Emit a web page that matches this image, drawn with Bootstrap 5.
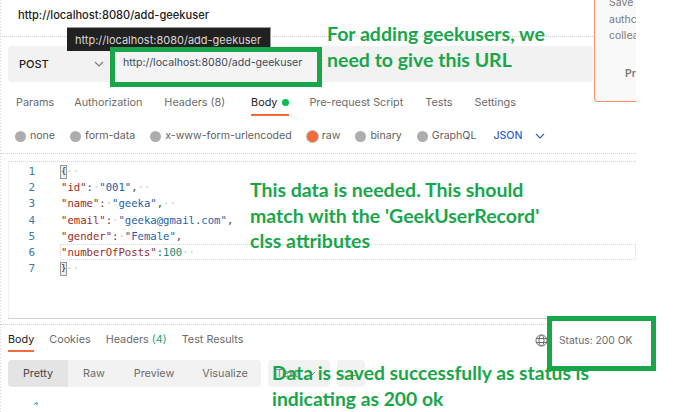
<!DOCTYPE html>
<html lang="en"><head><meta charset="utf-8"><title>Add geekuser</title>
<link href="https://cdn.jsdelivr.net/npm/bootstrap@5.3.0/dist/css/bootstrap.min.css" rel="stylesheet">
<style>
html,body{margin:0;background:#fff;overflow:hidden}
.shot{position:relative;width:685px;height:412px;overflow:hidden;font-family:Inter,"Liberation Sans",sans-serif;font-size:10.8px;color:#6b6b6b;background:repeating-linear-gradient(to bottom,#d8d8d8 0 1px,#fff 1px 3px) left top/1px 100% no-repeat}
.main-col{width:636px;height:412px}
.title-row{height:37px;padding:8px 0 0 18px;font-size:11.1px;color:#212121;font-weight:500;line-height:15px;border-bottom:1px dotted #ccc;width:593px;white-space:nowrap}
.req-bar{margin:9px 0 0 8px;width:585px;height:36px;background:#f2f2f2;border-radius:4px;padding:0 11px;color:#212121}
.req-method{width:75px;font-weight:500;font-size:11px}
.tab-row{padding-left:16px;height:33px;margin-top:4px;gap:22px}
.tab-item{position:relative;line-height:33px;white-space:nowrap}
.tab-first{margin-right:-2px}
.tab-on{color:#212121}
.tab-row .tab-on{margin-left:4px;margin-right:-2px}
.tab-on::after{content:"";position:absolute;left:0;right:0;bottom:3px;height:2px;background:#f26b3a}
.dot-on{display:inline-block;width:7px;height:7px;border-radius:50%;background:#0cbb52;margin-left:5px}
.radio-row{height:22px;margin-top:6px;padding-left:15px;color:#5f5f5f;font-size:10.6px;white-space:nowrap}
.radio-dot{display:inline-block;width:11px;height:11px;border-radius:50%;background:#adadad;margin-right:4px;flex:none}
.radio-next{margin-left:15px}
.radio-on{background:#f26b3a;box-shadow:0 0 0 1px #bbb}
.json-pick{color:#2f5fd0;font-weight:500;margin-left:17px}
.json-chev{margin-left:12px}
.sep-a{border-top:1px dotted #ccc;margin-top:6px}
.code-box{margin:7px 0 0 8px;height:157px;border-top:1px dotted #e0c4dc;padding-top:1px;font-family:"DejaVu Sans Mono","Liberation Mono",monospace;font-size:10.6px;border-left:1px dotted #e4e4e4}
.code-line{height:16.2px;line-height:16.2px;white-space:pre}
.gut{display:inline-block;width:26px;text-align:right;margin-right:26px;color:#3a7ca5;font-size:11px}
.k{color:#9c2b1f}.s{color:#1f5fa8}.n{color:#1a8a78}.p{color:#444}
.brace{display:inline-block;outline:1px solid #999;background:#eee;color:#222;width:5px;height:12px;line-height:11px;font-size:9px;overflow:hidden;vertical-align:middle}
.ws{color:#c8c8c8}
.line-six{position:absolute;left:60px;top:244px;width:576px;height:16px;border:1px dotted #d8d8d8;border-left-color:#e8c8d8}
.rule-b{width:540px;margin-left:8px;border-top:1px solid #d3d3d3}
.sep-b{border-top:1px dotted #ccc;margin-top:5px}
.res-tabs{padding-left:8px;height:27px;gap:15px}
.res-tabs .tab-item{line-height:29px}
.res-tabs .tab-on::after{bottom:0}
.count{color:#2aa56b}
.view-row{margin:8px 0 0 8px;gap:7px}
.view-seg{width:253px;height:27px;background:#f2f2f2;border-radius:4px}
.view-opt{line-height:28px;text-align:center;color:#6b6b6b}
.view-act{width:60px;height:27px;background:#e4e4e4;border-radius:4px 0 0 4px;color:#444}
.raw-opt{margin-left:15px}
.prev-opt{margin-left:29px}
.vis-opt{margin-left:28px}
.view-fmt{width:62px;height:27px;background:#f2f2f2;border-radius:4px;padding-left:8px;line-height:28px;color:#888}
.view-x{width:28px;height:27px;background:#f2f2f2;border-radius:4px;padding:12px 0 0 12px;line-height:0}
.fmt-chev{margin-left:10px;vertical-align:1px}
.mark-row{margin:15px 0 0 34px;line-height:0}
.hover-tip{position:absolute;left:67px;top:27px;width:204px;height:24px;background:#212121;border:1px solid #9a9a9a;border-width:1px 1px 0 0;color:#d8d8d8;font-size:11px;line-height:24px;padding-left:8px;white-space:nowrap}
.side-note{position:absolute;left:594px;top:-14px;width:42px;height:116px;background:#f9f9f9;border:1px solid #ff8f66;border-right:0;border-radius:0 0 0 4px;font-size:10.5px;color:#7a7a7a;overflow:hidden;padding-top:8px;padding-left:14px;line-height:16.5px;white-space:nowrap}
.side-pr{margin-top:21px;padding-left:16px;font-weight:600}
.green-box{position:absolute;border:5px solid #19a64a;white-space:nowrap}
.box-url{left:110px;top:47px;width:212px;height:40px;background:#f4f4f4;color:#3c4a5c;font-size:10.6px;line-height:22px;padding-left:8px}
.box-status{left:547px;top:316px;width:109px;height:55px;background:#fff;font-size:10.3px;line-height:14px;padding:12px 0 0 7px;color:#6b6b6b}
.note{position:absolute;font-family:Lato,"Liberation Sans",sans-serif;font-weight:700;color:#19a64a;font-size:19.5px;line-height:25.5px;white-space:nowrap}
.note-a{left:327px;top:21px}
.note-b{left:250px;top:177px}
.note-c{left:272px;top:360px;font-size:19.3px}
.globe{position:absolute;left:535px;top:334px}
</style></head><body>
<div class="shot">
 <div class="main-col d-flex flex-column">
  <div class="title-row">http://localhost:8080/add-geekuser</div>
  <div class="req-bar d-flex align-items-center">
   <span class="req-method">POST</span>
   <svg width="10" height="6" viewBox="0 0 10 6"><path d="M1 1l4 4 4-4" fill="none" stroke="#777" stroke-width="1.1"/></svg>
  </div>
  <div class="tab-row d-flex">
   <span class="tab-item tab-first">Params</span>
   <span class="tab-item">Authorization</span>
   <span class="tab-item">Headers (8)</span>
   <span class="tab-item tab-on">Body<span class="dot-on"></span></span>
   <span class="tab-item">Pre-request Script</span>
   <span class="tab-item">Tests</span>
   <span class="tab-item">Settings</span>
  </div>
  <div class="radio-row d-flex align-items-center">
   <span class="radio-dot"></span><span>none</span>
   <span class="radio-dot radio-next"></span><span>form-data</span>
   <span class="radio-dot radio-next"></span><span>x-www-form-urlencoded</span>
   <span class="radio-dot radio-on radio-next"></span><span>raw</span>
   <span class="radio-dot radio-next"></span><span>binary</span>
   <span class="radio-dot radio-next"></span><span>GraphQL</span>
   <span class="json-pick">JSON</span>
   <svg class="json-chev" width="10" height="6" viewBox="0 0 10 6"><path d="M1 1l4 4 4-4" fill="none" stroke="#2f5fd0" stroke-width="1.1"/></svg>
  </div>
  <div class="sep-a"></div>
  <div class="code-box">
   <div class="code-line"><span class="gut">1</span><span class="brace">{</span><span class="ws">··</span></div>
   <div class="code-line"><span class="gut">2</span><span class="k">"id"</span><span class="p">:</span><span class="ws">·</span><span class="s">"001"</span><span class="p">,</span><span class="ws">··</span></div>
   <div class="code-line"><span class="gut">3</span><span class="k">"name"</span><span class="p">:</span><span class="ws">·</span><span class="s">"geeka"</span><span class="p">,</span><span class="ws">··</span></div>
   <div class="code-line"><span class="gut">4</span><span class="k">"email"</span><span class="p">:</span><span class="ws">·</span><span class="s">"geeka@gmail.com"</span><span class="p">,</span></div>
   <div class="code-line"><span class="gut">5</span><span class="k">"gender"</span><span class="p">:</span><span class="ws">·</span><span class="s">"Female"</span><span class="p">,</span></div>
   <div class="code-line"><span class="gut">6</span><span class="k">"numberOfPosts"</span><span class="p">:</span><span class="n">100</span><span class="ws">··</span></div>
   <div class="code-line"><span class="gut">7</span><span class="brace">}</span><span class="ws">··</span></div>
  </div>
  <div class="rule-b"></div>
  <div class="sep-b"></div>
  <div class="res-tabs d-flex">
   <span class="tab-item tab-on">Body</span>
   <span class="tab-item">Cookies</span>
   <span class="tab-item">Headers <span class="count">(4)</span></span>
   <span class="tab-item">Test Results</span>
  </div>
  <div class="view-row d-flex">
   <div class="view-seg d-flex">
    <span class="view-opt view-act">Pretty</span>
    <span class="view-opt raw-opt">Raw</span>
    <span class="view-opt prev-opt">Preview</span>
    <span class="view-opt vis-opt">Visualize</span>
   </div>
   <div class="view-fmt">Text<svg class="fmt-chev" width="8" height="5" viewBox="0 0 8 5"><path d="M1 1l3 3 3-3" fill="none" stroke="#777"/></svg></div>
   <div class="view-x"><svg width="7" height="8" viewBox="0 0 7 8"><path d="M3.5 0v8M0 3.5h7" stroke="#f26b3a" fill="none"/></svg></div>
  </div>
  <div class="mark-row"><svg width="4" height="3" viewBox="0 0 4 3"><path d="M0 2.5L3 .5V3" fill="none" stroke="#2a8fb5"/></svg></div>
 </div>
 <div class="line-six"></div>
 <div class="side-note">Save<br>authc<br>collea<div class="side-pr">Pr</div></div>
 <div class="hover-tip">http://localhost:8080/add-geekuser</div>
 <div class="green-box box-url">http://localhost:8080/add-geekuser</div>
 <svg class="globe" width="13" height="13" viewBox="0 0 13 13"><g fill="none" stroke="#6b6b6b" stroke-width="1"><circle cx="6.5" cy="6.5" r="5.5"/><ellipse cx="6.5" cy="6.5" rx="2.5" ry="5.5"/><path d="M1.2 4.5h10.6M1.2 8.5h10.6"/></g></svg>
 <div class="green-box box-status">Status: 200 OK</div>
 <div class="note note-a">For adding geekusers, we<br>need to give this URL</div>
 <div class="note note-b">This data is needed. This should<br>match with the 'GeekUserRecord'<br>clss attributes</div>
 <div class="note note-c">Data is saved successfully as status is<br>indicating as 200 ok</div>
</div>
<script src="https://cdn.jsdelivr.net/npm/bootstrap@5.3.0/dist/js/bootstrap.bundle.min.js"></script>
</body></html>
